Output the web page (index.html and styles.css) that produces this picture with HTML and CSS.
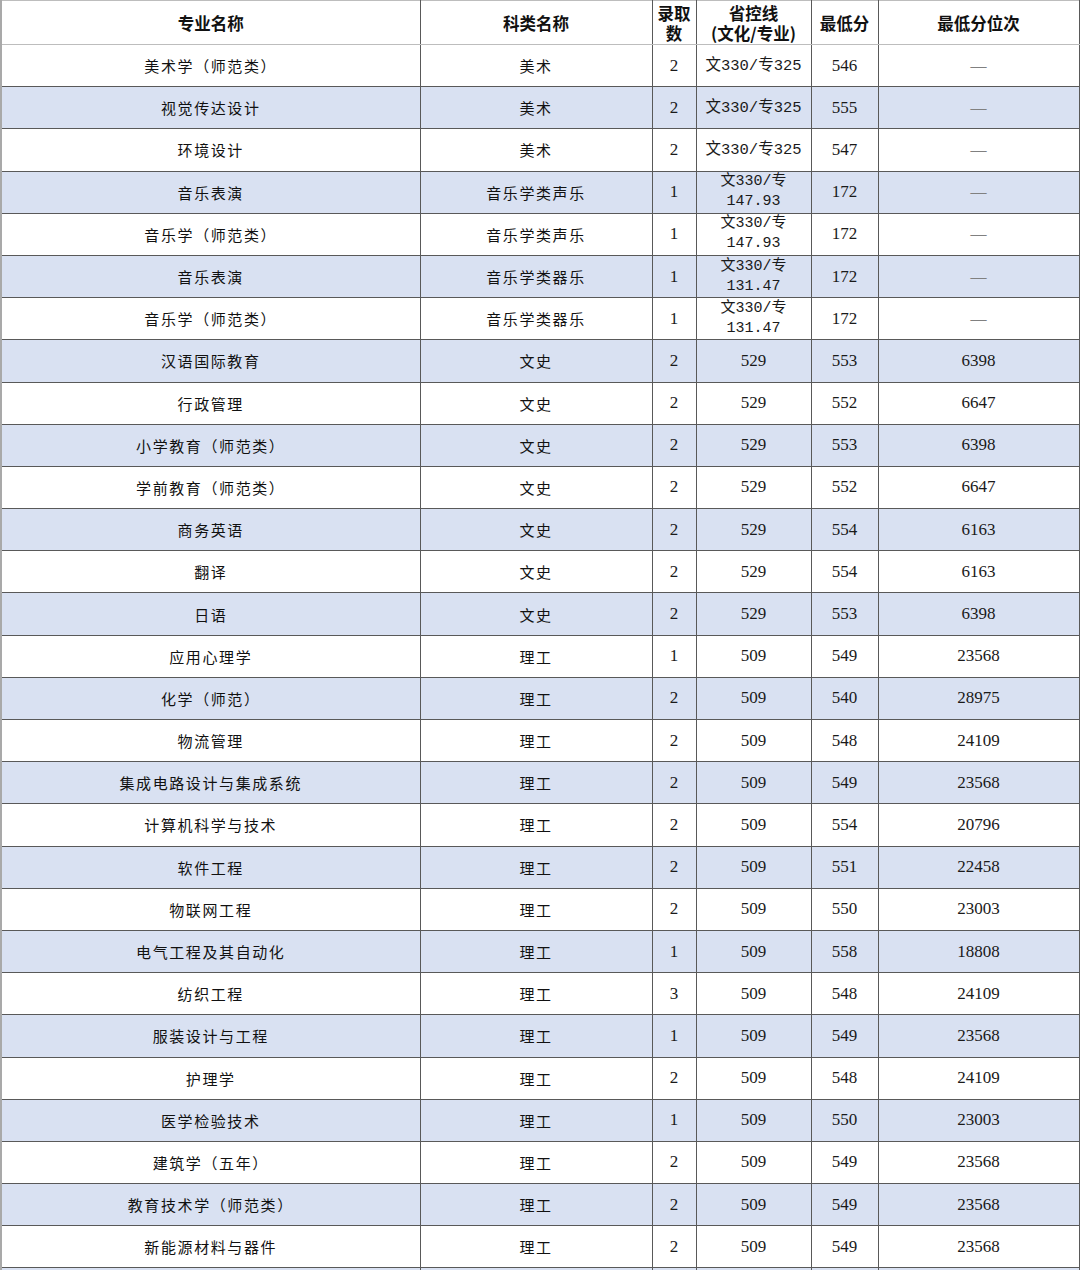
FILE: index.html
```html
<!DOCTYPE html>
<html lang="zh-CN">
<head>
<meta charset="utf-8">
<title>录取分数</title>
<link rel="stylesheet" href="styles.css">
</head>
<body>
<table class="score-table">
  <colgroup>
    <col class="c-major"><col class="c-type"><col class="c-num"><col class="c-line"><col class="c-min"><col class="c-rank">
  </colgroup>
  <thead>
    <tr class="head">
      <th>专业名称</th><th>科类名称</th><th>录取<br>数</th><th>省控线<br>(文化/专业)</th><th>最低分</th><th>最低分位次</th>
    </tr>
  </thead>
  <tbody>
    <tr><td class="cn">美术学（师范类）</td><td class="cn">美术</td><td class="n">2</td><td class="mono">文330/专325</td><td class="n">546</td><td class="dash">—</td></tr>
    <tr class="band"><td class="cn">视觉传达设计</td><td class="cn">美术</td><td class="n">2</td><td class="mono">文330/专325</td><td class="n">555</td><td class="dash">—</td></tr>
    <tr><td class="cn">环境设计</td><td class="cn">美术</td><td class="n">2</td><td class="mono">文330/专325</td><td class="n">547</td><td class="dash">—</td></tr>
    <tr class="band"><td class="cn">音乐表演</td><td class="cn">音乐学类声乐</td><td class="n">1</td><td class="mono two">文330/专<br>147.93</td><td class="n">172</td><td class="dash">—</td></tr>
    <tr><td class="cn">音乐学（师范类）</td><td class="cn">音乐学类声乐</td><td class="n">1</td><td class="mono two">文330/专<br>147.93</td><td class="n">172</td><td class="dash">—</td></tr>
    <tr class="band"><td class="cn">音乐表演</td><td class="cn">音乐学类器乐</td><td class="n">1</td><td class="mono two">文330/专<br>131.47</td><td class="n">172</td><td class="dash">—</td></tr>
    <tr><td class="cn">音乐学（师范类）</td><td class="cn">音乐学类器乐</td><td class="n">1</td><td class="mono two">文330/专<br>131.47</td><td class="n">172</td><td class="dash">—</td></tr>
    <tr class="band"><td class="cn">汉语国际教育</td><td class="cn">文史</td><td class="n">2</td><td class="n">529</td><td class="n">553</td><td class="n">6398</td></tr>
    <tr><td class="cn">行政管理</td><td class="cn">文史</td><td class="n">2</td><td class="n">529</td><td class="n">552</td><td class="n">6647</td></tr>
    <tr class="band"><td class="cn">小学教育（师范类）</td><td class="cn">文史</td><td class="n">2</td><td class="n">529</td><td class="n">553</td><td class="n">6398</td></tr>
    <tr><td class="cn">学前教育（师范类）</td><td class="cn">文史</td><td class="n">2</td><td class="n">529</td><td class="n">552</td><td class="n">6647</td></tr>
    <tr class="band"><td class="cn">商务英语</td><td class="cn">文史</td><td class="n">2</td><td class="n">529</td><td class="n">554</td><td class="n">6163</td></tr>
    <tr><td class="cn">翻译</td><td class="cn">文史</td><td class="n">2</td><td class="n">529</td><td class="n">554</td><td class="n">6163</td></tr>
    <tr class="band"><td class="cn">日语</td><td class="cn">文史</td><td class="n">2</td><td class="n">529</td><td class="n">553</td><td class="n">6398</td></tr>
    <tr><td class="cn">应用心理学</td><td class="cn">理工</td><td class="n">1</td><td class="n">509</td><td class="n">549</td><td class="n">23568</td></tr>
    <tr class="band"><td class="cn">化学（师范）</td><td class="cn">理工</td><td class="n">2</td><td class="n">509</td><td class="n">540</td><td class="n">28975</td></tr>
    <tr><td class="cn">物流管理</td><td class="cn">理工</td><td class="n">2</td><td class="n">509</td><td class="n">548</td><td class="n">24109</td></tr>
    <tr class="band"><td class="cn">集成电路设计与集成系统</td><td class="cn">理工</td><td class="n">2</td><td class="n">509</td><td class="n">549</td><td class="n">23568</td></tr>
    <tr><td class="cn">计算机科学与技术</td><td class="cn">理工</td><td class="n">2</td><td class="n">509</td><td class="n">554</td><td class="n">20796</td></tr>
    <tr class="band"><td class="cn">软件工程</td><td class="cn">理工</td><td class="n">2</td><td class="n">509</td><td class="n">551</td><td class="n">22458</td></tr>
    <tr><td class="cn">物联网工程</td><td class="cn">理工</td><td class="n">2</td><td class="n">509</td><td class="n">550</td><td class="n">23003</td></tr>
    <tr class="band"><td class="cn">电气工程及其自动化</td><td class="cn">理工</td><td class="n">1</td><td class="n">509</td><td class="n">558</td><td class="n">18808</td></tr>
    <tr><td class="cn">纺织工程</td><td class="cn">理工</td><td class="n">3</td><td class="n">509</td><td class="n">548</td><td class="n">24109</td></tr>
    <tr class="band"><td class="cn">服装设计与工程</td><td class="cn">理工</td><td class="n">1</td><td class="n">509</td><td class="n">549</td><td class="n">23568</td></tr>
    <tr><td class="cn">护理学</td><td class="cn">理工</td><td class="n">2</td><td class="n">509</td><td class="n">548</td><td class="n">24109</td></tr>
    <tr class="band"><td class="cn">医学检验技术</td><td class="cn">理工</td><td class="n">1</td><td class="n">509</td><td class="n">550</td><td class="n">23003</td></tr>
    <tr><td class="cn">建筑学（五年）</td><td class="cn">理工</td><td class="n">2</td><td class="n">509</td><td class="n">549</td><td class="n">23568</td></tr>
    <tr class="band"><td class="cn">教育技术学（师范类）</td><td class="cn">理工</td><td class="n">2</td><td class="n">509</td><td class="n">549</td><td class="n">23568</td></tr>
    <tr><td class="cn">新能源材料与器件</td><td class="cn">理工</td><td class="n">2</td><td class="n">509</td><td class="n">549</td><td class="n">23568</td></tr>
    <tr class="band"><td class="cn"></td><td class="cn"></td><td class="n"></td><td class="n"></td><td class="n"></td><td class="n"></td></tr>
  </tbody>
</table>
</body>
</html>
```
FILE: styles.css
```css
html, body {
  margin: 0;
  padding: 0;
  background: #ffffff;
}

body {
  font-family: "Noto Sans CJK SC", "Liberation Sans", sans-serif;
  color: #1a1a1a;
}

.score-table {
  border-collapse: collapse;
  table-layout: fixed;
  width: 1078px;
}

.c-major { width: 419px; }
.c-type { width: 232px; }
.c-num { width: 44px; }
.c-line { width: 115px; }
.c-min { width: 67px; }
.c-rank { width: 201px; }

.score-table th,
.score-table td {
  border: 1px solid #595959;
  padding: 0;
  text-align: center;
  vertical-align: middle;
  overflow: hidden;
  white-space: nowrap;
}

.score-table th:first-child,
.score-table td:first-child {
  border-left: 2px solid #a9a9a9;
}

.head {
  height: 44px;
}

.head th {
  font-family: "Noto Sans CJK SC", "Liberation Sans", sans-serif;
  font-weight: 700;
  font-size: 16.5px;
  line-height: 20px;
  color: #111111;
  border-top: 1px solid #bdbdbd;
  border-bottom: 1px solid #bdbdbd;
}

tbody tr {
  height: 42.2px;
}

.band td {
  background: #d9e1f2;
}

.cn {
  font-family: "Noto Sans CJK SC", serif;
  font-size: 15px;
  letter-spacing: 1.6px;
  color: #111111;
  padding-top: 4px;
}

.n {
  font-family: "Liberation Serif", "Noto Sans CJK SC", serif;
  font-size: 17px;
  color: #1a1a1a;
  padding-top: 6px;
}

.mono {
  font-family: "Liberation Mono", "Noto Sans CJK SC", monospace;
  font-size: 15.5px;
  line-height: 20px;
  color: #1a1a1a;
  padding-top: 5px;
}

.two {
  font-size: 15px;
  padding-top: 5px;
}

.dash {
  font-family: "Liberation Serif", serif;
  font-size: 16px;
  color: #808080;
  padding-top: 4px;
}
```
